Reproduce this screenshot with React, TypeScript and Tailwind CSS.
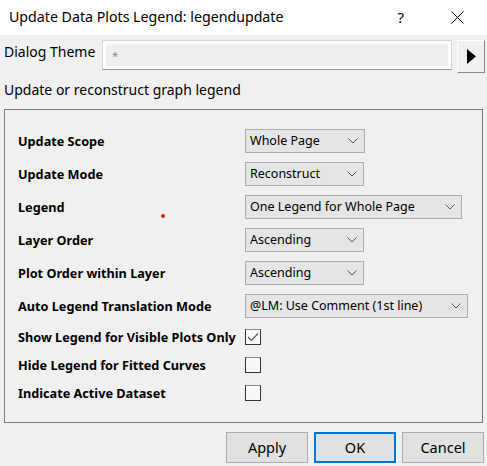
import React from "react";

const font = { fontFamily: '"Noto Sans", "Open Sans", sans-serif' };

function Chevron() {
  return (
    <svg width="10" height="6" viewBox="0 0 10 6" className="shrink-0">
      <path d="M0.5 0.5 L5 5 L9.5 0.5" fill="none" stroke="#555" strokeWidth="1" />
    </svg>
  );
}

function Select({ value, w }: { value: string; w: string }) {
  return (
    <div className={`${w} h-[24px] bg-[#e5e5e5] border border-[#adadad] flex items-center justify-between pl-[4px] pr-[6px] text-[12.5px] text-black leading-none`}>
      <span>{value}</span>
      <Chevron />
    </div>
  );
}

function Check({ checked }: { checked?: boolean }) {
  return (
    <div className="w-[16px] h-[16px] border border-[#333] border-t-[#8a8a8a] bg-[#f8f8f8] flex items-center justify-center">
      {checked && (
        <svg width="12" height="10" viewBox="0 0 12 10">
          <path d="M1 5 L4.5 8.5 L11 1.5" fill="none" stroke="#555" strokeWidth="1.2" />
        </svg>
      )}
    </div>
  );
}

export default function App() {
  const selRows: [string, string, string][] = [
    ["Update Scope", "Whole Page", "w-[120px]"],
    ["Update Mode", "Reconstruct", "w-[119px]"],
    ["Legend", "One Legend for Whole Page", "w-[217px]"],
    ["Layer Order", "Ascending", "w-[119px]"],
    ["Plot Order within Layer", "Ascending", "w-[119px]"],
    ["Auto Legend Translation Mode", "@LM: Use Comment (1st line)", "w-[223px]"],
  ];
  const chkRows: [string, boolean][] = [
    ["Show Legend for Visible Plots Only", true],
    ["Hide Legend for Fitted Curves", false],
    ["Indicate Active Dataset", false],
  ];
  return (
    <div className="w-[487px] h-[466px] bg-[#f0f0f0] relative overflow-hidden text-black" style={font}>
      {/* title bar */}
      <div className="h-[35px] bg-white flex items-center">
        <span className="ml-[9px] text-[14.2px] leading-none flex-1">Update Data Plots Legend: legendupdate</span>
        <span className="text-[15px] leading-none mr-[47px]">?</span>
        <svg width="13" height="13" viewBox="0 0 13 13" className="mr-[23px]">
          <path d="M0.5 0.5 L12.5 12.5 M12.5 0.5 L0.5 12.5" stroke="#000" strokeWidth="1" />
        </svg>
      </div>
      {/* dialog theme row */}
      <div className="flex items-start mt-[5px] pl-[4px] h-[33px]">
        <span className="text-[14px] leading-none mt-[5px] w-[98px]">Dialog Theme</span>
        <div className="w-[350px] h-[30px] border border-[#d6d6d6] border-b-[#9a9a9a] bg-white p-[3px]">
          <div className="h-full bg-[#efefef] flex items-center pl-[6px] text-[11px] text-[#7a8aa0] leading-none">*</div>
        </div>
        <div className="ml-[5px] w-[28px] h-[33px] bg-[#f0f0f0] border border-t-white border-l-white border-r-[#8a8a8a] border-b-[#8a8a8a] flex items-center justify-center">
          <svg width="9" height="15" viewBox="0 0 9 15">
            <path d="M0 0 L9 7.5 L0 15 Z" fill="#000" />
          </svg>
        </div>
      </div>
      <div className="pl-[4px] mt-[9px] h-[16px] flex items-center text-[14px] leading-none">Update or reconstruct graph legend</div>
      {/* group box */}
      <div className="mx-[4px] mt-[11px] h-[314px] border border-[#7a7a7a] pl-[13px] pt-[19px]">
        <div className="flex flex-col gap-[9px]">
          {selRows.map(([l, v, w]) => (
            <div key={l} className="flex items-center h-[24px]">
              <span className="w-[227px] text-[12.7px] font-bold leading-none">{l}</span>
              <Select value={v} w={w} />
            </div>
          ))}
        </div>
        <div className="flex flex-col gap-[12px] mt-[11px]">
          {chkRows.map(([l, c]) => (
            <div key={l} className="flex items-center h-[16px]">
              <span className="w-[227px] text-[12.7px] font-bold leading-none whitespace-nowrap">{l}</span>
              <Check checked={c} />
            </div>
          ))}
        </div>
      </div>
      {/* buttons */}
      <div className="flex justify-end gap-[6px] pr-[3px] mt-[9px]">
        <div className="w-[82px] h-[31px] bg-[#e1e1e1] border border-[#adadad] flex items-center justify-center text-[14.5px]">Apply</div>
        <div className="w-[82px] h-[31px] bg-[#e1e1e1] border-2 border-[#0078d7] flex items-center justify-center text-[14.5px]">OK</div>
        <div className="w-[82px] h-[31px] bg-[#e1e1e1] border border-[#adadad] flex items-center justify-center text-[14.5px]">Cancel</div>
      </div>
      <div className="absolute left-[161px] top-[214px] w-[4px] h-[4px] rounded-full bg-[#e8141c]" />
    </div>
  );
}
